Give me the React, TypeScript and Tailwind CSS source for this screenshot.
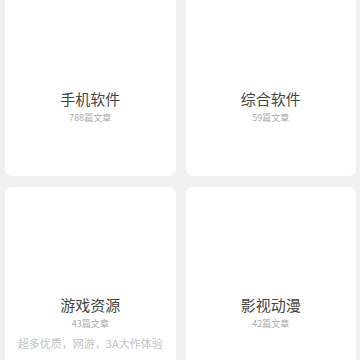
const categories = [
  { name: "手机软件", count: 788, desc: "" },
  { name: "综合软件", count: 59, desc: "" },
  { name: "游戏资源", count: 43, desc: "超多优质，网游，3A大作体验" },
  { name: "影视动漫", count: 42, desc: "" },
];

function CategoryCard({ name, count, desc }: { name: string; count: number; desc: string }) {
  return (
    <div className="bg-white rounded-[7px] flex flex-col items-center pb-[29px] overflow-hidden">
      <div className="h-[108px] w-full" />
      <div className="text-[15px] leading-[20px] text-[#444]">{name}</div>
      <div className="text-[9px] leading-[18px] text-[#aaa]">{count}篇文章</div>
      <div className="text-[11px] leading-[20px] text-[#c2c2c2] whitespace-nowrap h-[20px]">{desc}</div>
    </div>
  );
}

export default function App() {
  return (
    <div
      className="w-[360px] h-[360px] overflow-hidden bg-[#f0f0f0]"
      style={{ fontFamily: '"Noto Sans CJK SC", "Noto Sans", sans-serif' }}
    >
      <div className="-mt-[19px] pl-[5px] pr-[4px] grid grid-cols-2 gap-x-[10px] gap-y-[11px]">
        {categories.map((c) => (
          <CategoryCard key={c.name} {...c} />
        ))}
      </div>
    </div>
  );
}
